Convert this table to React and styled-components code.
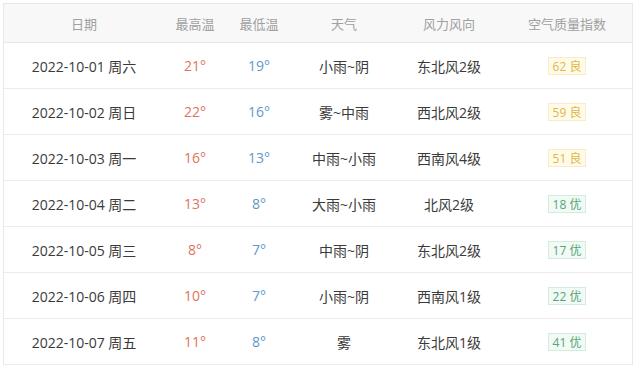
import styled, { createGlobalStyle } from "styled-components";

const GlobalStyle = createGlobalStyle`
    html, body {
        margin: 0;
        padding: 0;
        background: #fff;
    }
    body {
        font-family: "Open Sans", "Noto Sans CJK SC", sans-serif;
    }
`;

const days = [
    { date: "2022-10-01 周六", high: 21, low: 19, weather: "小雨~阴", wind: "东北风2级", aqi: 62, level: "良" },
    { date: "2022-10-02 周日", high: 22, low: 16, weather: "雾~中雨", wind: "西北风2级", aqi: 59, level: "良" },
    { date: "2022-10-03 周一", high: 16, low: 13, weather: "中雨~小雨", wind: "西南风4级", aqi: 51, level: "良" },
    { date: "2022-10-04 周二", high: 13, low: 8, weather: "大雨~小雨", wind: "北风2级", aqi: 18, level: "优" },
    { date: "2022-10-05 周三", high: 8, low: 7, weather: "中雨~阴", wind: "东北风2级", aqi: 17, level: "优" },
    { date: "2022-10-06 周四", high: 10, low: 7, weather: "小雨~阴", wind: "西南风1级", aqi: 22, level: "优" },
    { date: "2022-10-07 周五", high: 11, low: 8, weather: "雾", wind: "东北风1级", aqi: 41, level: "优" },
];

const cols = "160px 62px 66px 104px 106px 1fr";

export default function App() {
    return (
        <>
            <GlobalStyle />
            <Page>
                <Table>
                    <HeadRow>
                        <HeadCell>日期</HeadCell>
                        <HeadCell>最高温</HeadCell>
                        <HeadCell>最低温</HeadCell>
                        <HeadCell>天气</HeadCell>
                        <HeadCell>风力风向</HeadCell>
                        <HeadCell>空气质量指数</HeadCell>
                    </HeadRow>
                    {days.map((d) => (
                        <Row key={d.date}>
                            <Cell>{d.date}</Cell>
                            <Temp $high>{d.high}°</Temp>
                            <Temp>{d.low}°</Temp>
                            <Cell>{d.weather}</Cell>
                            <Cell>{d.wind}</Cell>
                            <Cell>
                                <Badge $good={d.level === "优"}>{d.aqi}&nbsp;{d.level}</Badge>
                            </Cell>
                        </Row>
                    ))}
                </Table>
            </Page>
        </>
    );
}

const Page = styled.div`
    padding: 3px 7px 0 3px;
    width: 640px;
    box-sizing: border-box;
`;

const Table = styled.div`
    border: 1px solid #e8e8e8;
    border-bottom: none;
`;

const HeadRow = styled.div`
    display: grid;
    grid-template-columns: ${cols};
    height: 38px;
    background: #f8f8f8;
    border-bottom: 1px solid #e8e8e8;
`;

const Row = styled.div`
    display: grid;
    grid-template-columns: ${cols};
    height: 45px;
    border-bottom: 1px solid #ebebeb;
`;

const HeadCell = styled.div`
    display: flex;
    align-items: center;
    justify-content: center;
    font-size: 13px;
    color: #a0a0a0;
`;

const Cell = styled.div`
    display: flex;
    align-items: center;
    justify-content: center;
    font-size: 14px;
    color: #3a3a3a;
`;

const Temp = styled(Cell)`
    color: ${(p) => (p.$high ? "#e0735c" : "#5e98c9")};
`;

const Badge = styled.span`
    display: inline-flex;
    align-items: center;
    justify-content: center;
    height: 16px;
    padding: 0 4px;
    font-size: 12px;
    border: 1px solid ${(p) => (p.$good ? "#d3ecdd" : "#f8ecc4")};
    background: ${(p) => (p.$good ? "#f2faf5" : "#fffbeb")};
    color: ${(p) => (p.$good ? "#55a678" : "#e2b640")};
`;
